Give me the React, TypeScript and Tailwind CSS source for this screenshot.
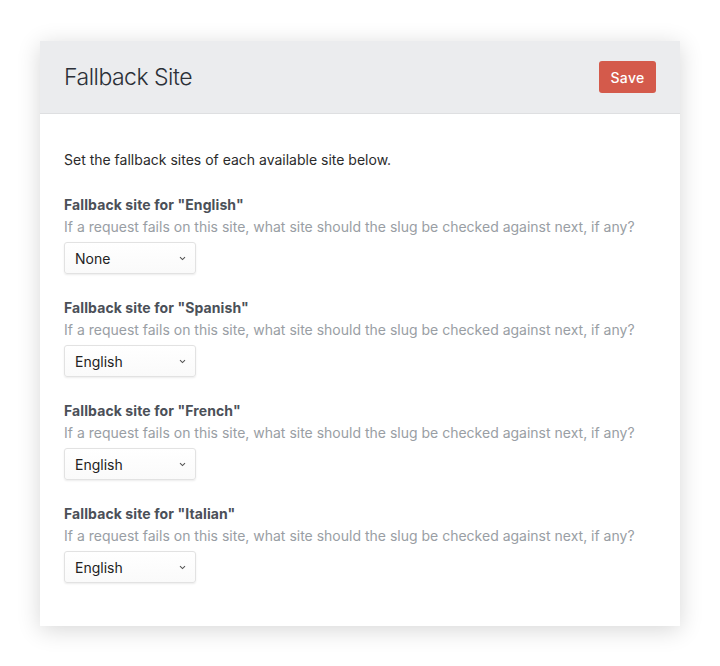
const sites = [
  { name: "English", value: "None" },
  { name: "Spanish", value: "English" },
  { name: "French", value: "English" },
  { name: "Italian", value: "English" },
];

function FakeSelect({ value }: { value: string }) {
  return (
    <div className="flex h-[32px] w-[132px] items-center justify-between rounded-[3px] border border-[#e2e2e2] bg-gradient-to-b from-white to-[#fafafa] pl-[10px] pr-[8px] text-[14px] text-[#222] shadow-[0_1px_2px_rgba(0,0,0,0.08)]">
      <span>{value}</span>
      <svg width="7" height="5" viewBox="0 0 7 5" className="mr-[1px]">
        <path d="M1 1.2 L3.5 3.6 L6 1.2" fill="none" stroke="#555" strokeWidth="1.1" />
      </svg>
    </div>
  );
}

function App() {
  return (
    <div className="min-h-[666px] bg-white pl-[40px] pt-[41px] font-['Inter','Liberation_Sans',Arial,sans-serif]">
      <div className="w-[640px] bg-white shadow-[0_4px_22px_rgba(0,0,0,0.16)]">
        <div className="flex h-[73px] items-center justify-between border-b border-[#dedfe1] bg-[#ebecee] pl-[24px] pr-[24px]">
          <h1 className="text-[23px] font-light tracking-[-0.5px] text-[#2b3038]">Fallback Site</h1>
          <button className="h-[32px] w-[57px] rounded-[3px] bg-[#d45a4b] text-[14px] font-medium tracking-[0.3px] text-white">
            Save
          </button>
        </div>
        <div className="px-[24px] pb-[43px] pt-[36px]">
          <p className="text-[14px] leading-[20px] text-[#2b2b2b]">
            Set the fallback sites of each available site below.
          </p>
          <div className="mt-[25px] flex flex-col gap-[24px]">
            {sites.map((s) => (
              <div key={s.name}>
                <div className="text-[14px] font-bold leading-[20px] tracking-[0.1px] text-[#4b5058]">
                  Fallback site for "{s.name}"
                </div>
                <div className="mb-[5px] mt-[2px] text-[14px] leading-[20px] text-[#999ea4]">
                  If a request fails on this site, what site should the slug be checked against next, if any?
                </div>
                <FakeSelect value={s.value} />
              </div>
            ))}
          </div>
        </div>
      </div>
    </div>
  );
}

export default App;
